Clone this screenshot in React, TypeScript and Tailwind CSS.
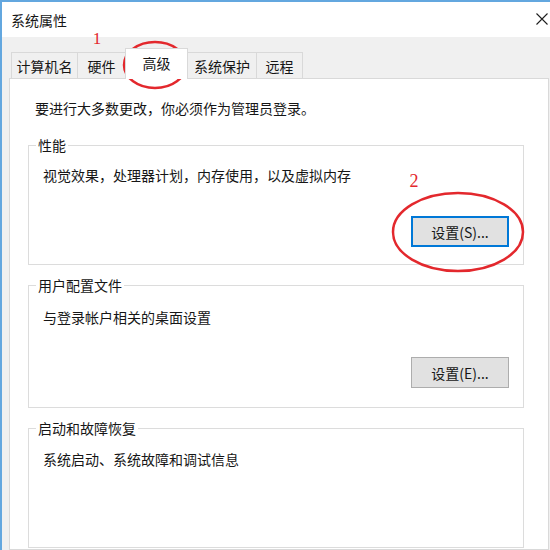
import React from 'react';

const font = "font-['Noto_Sans_CJK_SC','Microsoft_YaHei',sans-serif]";

function GroupBox({
  title,
  text,
  button,
  primary,
  className,
  textGap,
  buttonGap,
}: {
  title: string;
  text: string;
  button?: string;
  primary?: boolean;
  className: string;
  textGap: string;
  buttonGap?: string;
}) {
  return (
    <fieldset className={`ml-[18px] w-[496px] border border-[#dcdcdc] px-0 ${className}`}>
      <legend className="ml-[7px] px-[2px] leading-[20px]">{title}</legend>
      <div className="flex flex-col px-[14px]">
        <p className={`leading-[20px] ${textGap}`}>{text}</p>
        {button && (
          <button
            className={`self-end w-[98px] h-[31px] bg-[#e1e1e1] leading-[20px] ${buttonGap} ${
              primary ? 'border-2 border-[#0078d7]' : 'border border-[#adadad]'
            }`}
          >
            {button}
          </button>
        )}
      </div>
    </fieldset>
  );
}

export default function App() {
  return (
    <div
      className={`relative w-[550px] h-[550px] overflow-hidden flex flex-col bg-[#f0f0f0] border-t-2 border-l-2 border-[#63a7df] text-[14px] text-[#161616] ${font}`}
    >
      {/* title bar */}
      <div className="h-[35px] shrink-0 bg-white flex items-center justify-between pl-[9px] pr-[2px]">
        <span className="leading-[20px]">系统属性</span>
        <svg width="12" height="12" viewBox="0 0 12 12" className="mb-[1px]">
          <path d="M0.5 0.5 L11.5 11.5 M11.5 0.5 L0.5 11.5" stroke="#1e1e1e" strokeWidth="1.1" />
        </svg>
      </div>

      <div className="flex-1 flex flex-col pl-[7px] pr-[1px]">
        {/* tabs */}
        <div className="h-[41px] shrink-0 flex items-end pl-[2px]">
          <div className="w-[66px] h-[26px] border-t border-l border-[#d9d9d9] flex items-center justify-center leading-[20px]">
            计算机名
          </div>
          <div className="w-[48px] h-[26px] border-t border-l border-[#d9d9d9] flex items-center justify-center leading-[20px]">
            硬件
          </div>
          <div className="relative z-10 -mb-px w-[63px] h-[31px] bg-white border-t border-l border-r border-[#d9d9d9] flex items-center justify-center leading-[20px] pb-[2px]">
            高级
          </div>
          <div className="w-[68px] h-[26px] border-t border-[#d9d9d9] flex items-center justify-center leading-[20px]">
            系统保护
          </div>
          <div className="w-[47px] h-[26px] border-t border-l border-r border-[#d9d9d9] flex items-center justify-center leading-[20px]">
            远程
          </div>
        </div>

        {/* tab page */}
        <div className="flex-1 bg-white border border-[#d9d9d9] pt-[19px]">
          <p className="pl-[25px] leading-[20px]">要进行大多数更改，你必须作为管理员登录。</p>

          <GroupBox
            className="mt-[17px] pb-[17px]"
            title="性能"
            text="视觉效果，处理器计划，内存使用，以及虚拟内存"
            textGap="mt-[10px]"
            button="设置(S)..."
            buttonGap="mt-[31px]"
            primary
          />
          <GroupBox
            className="mt-[10px] pb-[19px]"
            title="用户配置文件"
            text="与登录帐户相关的桌面设置"
            textGap="mt-[12px]"
            button="设置(E)..."
            buttonGap="mt-[30px]"
          />
          <GroupBox
            className="mt-[10px] h-[130px]"
            title="启动和故障恢复"
            text="系统启动、系统故障和调试信息"
            textGap="mt-[11px]"
          />
        </div>
      </div>

      {/* red annotations */}
      <svg
        className="absolute -top-[2px] -left-[2px] pointer-events-none"
        width="550"
        height="550"
        viewBox="0 0 550 550"
      >
        <ellipse cx="155" cy="65" rx="31" ry="23" fill="none" stroke="#e3282d" strokeWidth="2.5" />
        <ellipse cx="458" cy="232" rx="65" ry="39" fill="none" stroke="#e3282d" strokeWidth="2.5" />
        <text x="97" y="44" textAnchor="middle" fontFamily="'Liberation Serif', serif" fontSize="17" fill="#e3282d">
          1
        </text>
        <text x="414" y="187" textAnchor="middle" fontFamily="'Liberation Serif', serif" fontSize="18" fill="#e3282d">
          2
        </text>
      </svg>
    </div>
  );
}
